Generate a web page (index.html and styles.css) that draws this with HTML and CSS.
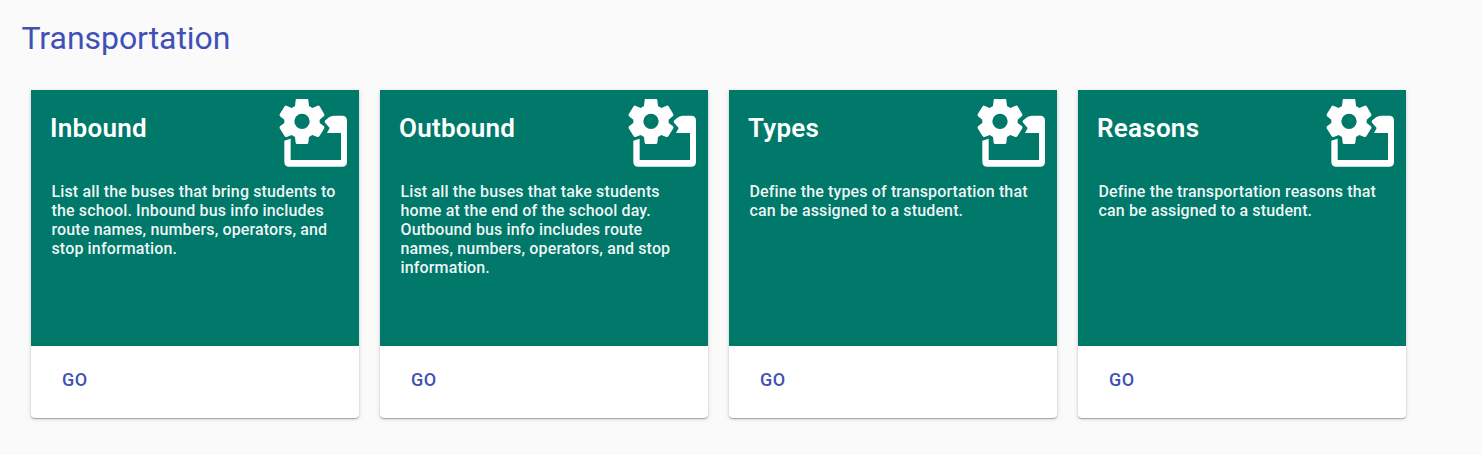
FILE: index.html
```html
<!DOCTYPE html>
<html lang="en">
<head>
<meta charset="utf-8">
<title>Transportation</title>
<link rel="stylesheet" href="styles.css">
</head>
<body>
<svg class="sprite" aria-hidden="true">
  <symbol id="folder-gear" viewBox="27 39 210 210">
    <path fill="currentColor" d="M43 167 L62 161 V225 H213 V144 H171 L179 129 L164 112 Q163 106 170 103 L177 97 Q184 92 192 92 H216 Q231 92 231 107 V230 Q231 245 216 245 H58 Q43 245 43 230Z"/>
    <path fill="currentColor" fill-rule="evenodd" d="M79 42 H112 Q115 42 115 46 L117 63 L127 69 L143 62 Q147 61 149 64 L163 88 Q164 91 162 93 L149 104 V114 L162 124 Q164 127 163 130 L148 154 Q146 157 142 156 L127 150 L117 156 L115 173 Q114 177 111 177 H81 Q78 177 77 173 L75 156 L65 150 L50 156 Q46 157 44 154 L29 130 Q28 127 30 124 L43 114 V104 L30 94 Q28 91 29 88 L44 64 Q46 61 49 62 L65 69 L75 63 L77 46 Q77 42 79 42Z M96 86 A23 23 0 1 0 96 132 A23 23 0 1 0 96 86Z"/>
  </symbol>
</svg>
<h1 class="page-title">Transportation</h1>
<main class="cards">
  <article class="card">
    <div class="card-body">
      <header class="card-head"><h2 class="card-title">Inbound</h2><svg class="card-icon"><use href="#folder-gear"/></svg></header>
      <p class="card-text">List all the buses that bring students to the school. Inbound bus info includes route names, numbers, operators, and stop information.</p>
    </div>
    <footer class="card-actions"><button class="go">GO</button></footer>
  </article>
  <article class="card">
    <div class="card-body">
      <header class="card-head"><h2 class="card-title">Outbound</h2><svg class="card-icon"><use href="#folder-gear"/></svg></header>
      <p class="card-text">List all the buses that take students home at the end of the school day. Outbound bus info includes route names, numbers, operators, and stop information.</p>
    </div>
    <footer class="card-actions"><button class="go">GO</button></footer>
  </article>
  <article class="card">
    <div class="card-body">
      <header class="card-head"><h2 class="card-title">Types</h2><svg class="card-icon"><use href="#folder-gear"/></svg></header>
      <p class="card-text">Define the types of transportation that can be assigned to a student.</p>
    </div>
    <footer class="card-actions"><button class="go">GO</button></footer>
  </article>
  <article class="card">
    <div class="card-body">
      <header class="card-head"><h2 class="card-title">Reasons</h2><svg class="card-icon"><use href="#folder-gear"/></svg></header>
      <p class="card-text">Define the transportation reasons that can be assigned to a student.</p>
    </div>
    <footer class="card-actions"><button class="go">GO</button></footer>
  </article>
</main>
</body>
</html>
```

FILE: styles.css
```css
* { box-sizing: border-box; }
body {
  margin: 0;
  min-height: 100vh;
  padding: 18px 0 0 21px;
  background: #fafafa;
  font-family: Roboto, sans-serif;
}
.sprite { display: none; }
.page-title {
  margin: 0 0 0 .5px;
  color: #3f51b5;
  font-size: 32px;
  font-weight: 400;
  letter-spacing: -.05px;
  line-height: 40px;
}
.cards {
  display: flex;
  gap: 21px;
  padding: 32px 0 20px 10px;
}
.card {
  flex: none;
  width: 328px;
  height: 328px;
  background: #fff;
  border-radius: 0 0 4px 4px;
  box-shadow: 0 1px 1px rgba(0, 0, 0, .28), 0 1px 4px rgba(0, 0, 0, .16);
}
.card-body {
  height: 256px;
  padding: 8px 10px 0 19px;
  background: #00796b;
  color: #fff;
}
.card-head {
  display: flex;
  justify-content: space-between;
  height: 84px;
}
.card-title {
  margin: 14px 0 0;
  font-size: 26px;
  font-weight: 600;
  letter-spacing: .01em;
  line-height: 32px;
}
.card-icon {
  width: 70px;
  height: 70px;
}
.card-text {
  margin: 0 10px 0 1.5px;
  color: rgba(255, 255, 255, .95);
  font-size: 16px;
  font-weight: 500;
  letter-spacing: .14px;
  line-height: 19px;
}
.card-actions { padding: 16px 15px; }
.go {
  height: 36px;
  padding: 0 16px;
  border: 0;
  background: none;
  color: #3f51b5;
  font: 500 18px/36px Roboto, sans-serif;
  letter-spacing: .03em;
}
```
